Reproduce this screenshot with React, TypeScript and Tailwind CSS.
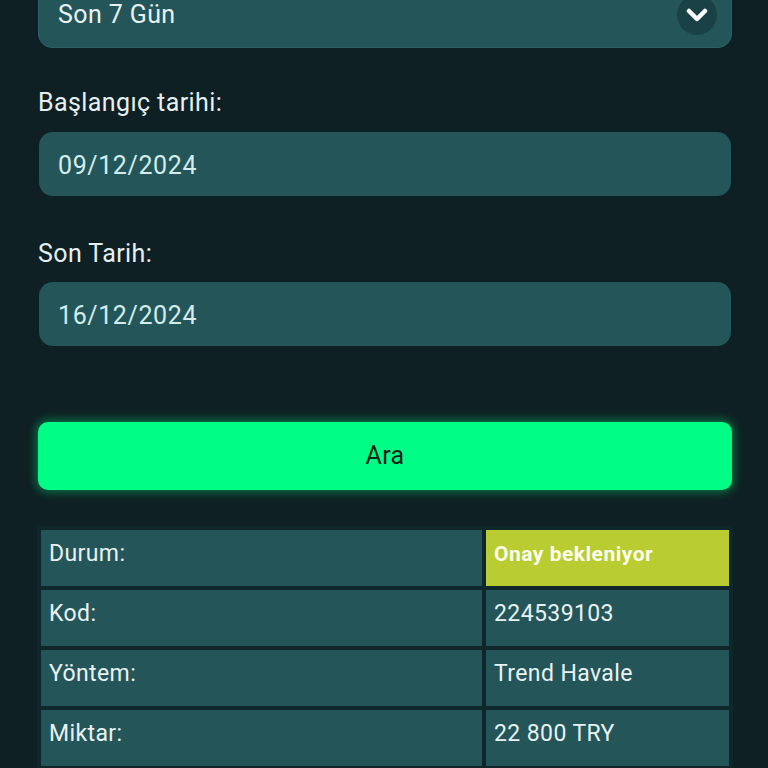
import React from "react";

const rows: { label: string; value: string; status?: boolean }[] = [
  { label: "Durum:", value: "Onay bekleniyor", status: true },
  { label: "Kod:", value: "224539103" },
  { label: "Yöntem:", value: "Trend Havale" },
  { label: "Miktar:", value: "22 800 TRY" },
];

export default function App() {
  return (
    <div
      className="w-[768px] h-[768px] overflow-hidden bg-[#0e2023] pl-[38px] pr-[36px]"
      style={{ fontFamily: "Roboto, 'Liberation Sans', sans-serif" }}
    >
      <div className="-mt-[18px] h-[66px] rounded-[14px] border border-[#2b6165] bg-[#245659] flex items-center justify-between pl-[19px] pr-[14px]">
        <span className="text-[25px] text-[#e8f2f2] tracking-[0.4px]">Son 7 Gün</span>
        <span className="w-[40px] h-[40px] rounded-full bg-[#1a4246] flex items-center justify-center">
          <svg width="22" height="16" viewBox="0 0 22 16" fill="none">
            <path d="M3 4 L11 12 L19 4" stroke="#ffffff" strokeWidth="4.5" strokeLinecap="round" strokeLinejoin="round" />
          </svg>
        </span>
      </div>

      <div className="mt-[41px] text-[25px] leading-[28px] text-[#e6f0f0] tracking-[0.4px]">Başlangıç tarihi:</div>
      <div className="mt-[15px] mx-[1px] h-[64px] rounded-[14px] bg-[#245659] flex items-center pl-[19px] pt-[3px]">
        <span className="text-[25px] text-[#d3ecec] tracking-[0.6px]">09/12/2024</span>
      </div>

      <div className="mt-[44px] text-[25px] leading-[28px] text-[#e6f0f0] tracking-[0.4px]">Son Tarih:</div>
      <div className="mt-[14px] mx-[1px] h-[64px] rounded-[14px] bg-[#245659] flex items-center pl-[19px] pt-[3px]">
        <span className="text-[25px] text-[#d3ecec] tracking-[0.6px]">16/12/2024</span>
      </div>

      <button className="mt-[76px] w-full h-[68px] rounded-[10px] bg-[#00fe86] shadow-[0_0_10px_2px_rgba(0,230,120,0.45)] flex items-center justify-center">
        <span className="text-[25px] text-[#0b2418] tracking-[0.4px]">Ara</span>
      </button>

      <div className="mt-[36px] -mx-[1px] bg-[#0f272a] p-[4px] grid grid-cols-[441px_243px] gap-[4px]">
        {rows.map((r) => (
          <React.Fragment key={r.label}>
            <div className="h-[56px] bg-[#245659] pl-[8px] pt-[10px] text-[23px] leading-[28px] text-[#e8f2f2] tracking-[0.4px]">
              {r.label}
            </div>
            <div
              className={
                r.status
                  ? "h-[56px] bg-[#b9cc32] pl-[8px] pt-[10px] text-[21px] leading-[28px] font-bold text-[#fbfdea] tracking-[0.5px]"
                  : "h-[56px] bg-[#245659] pl-[8px] pt-[10px] text-[23px] leading-[28px] text-[#e8f2f2] tracking-[0.4px]"
              }
            >
              {r.value}
            </div>
          </React.Fragment>
        ))}
      </div>
    </div>
  );
}
